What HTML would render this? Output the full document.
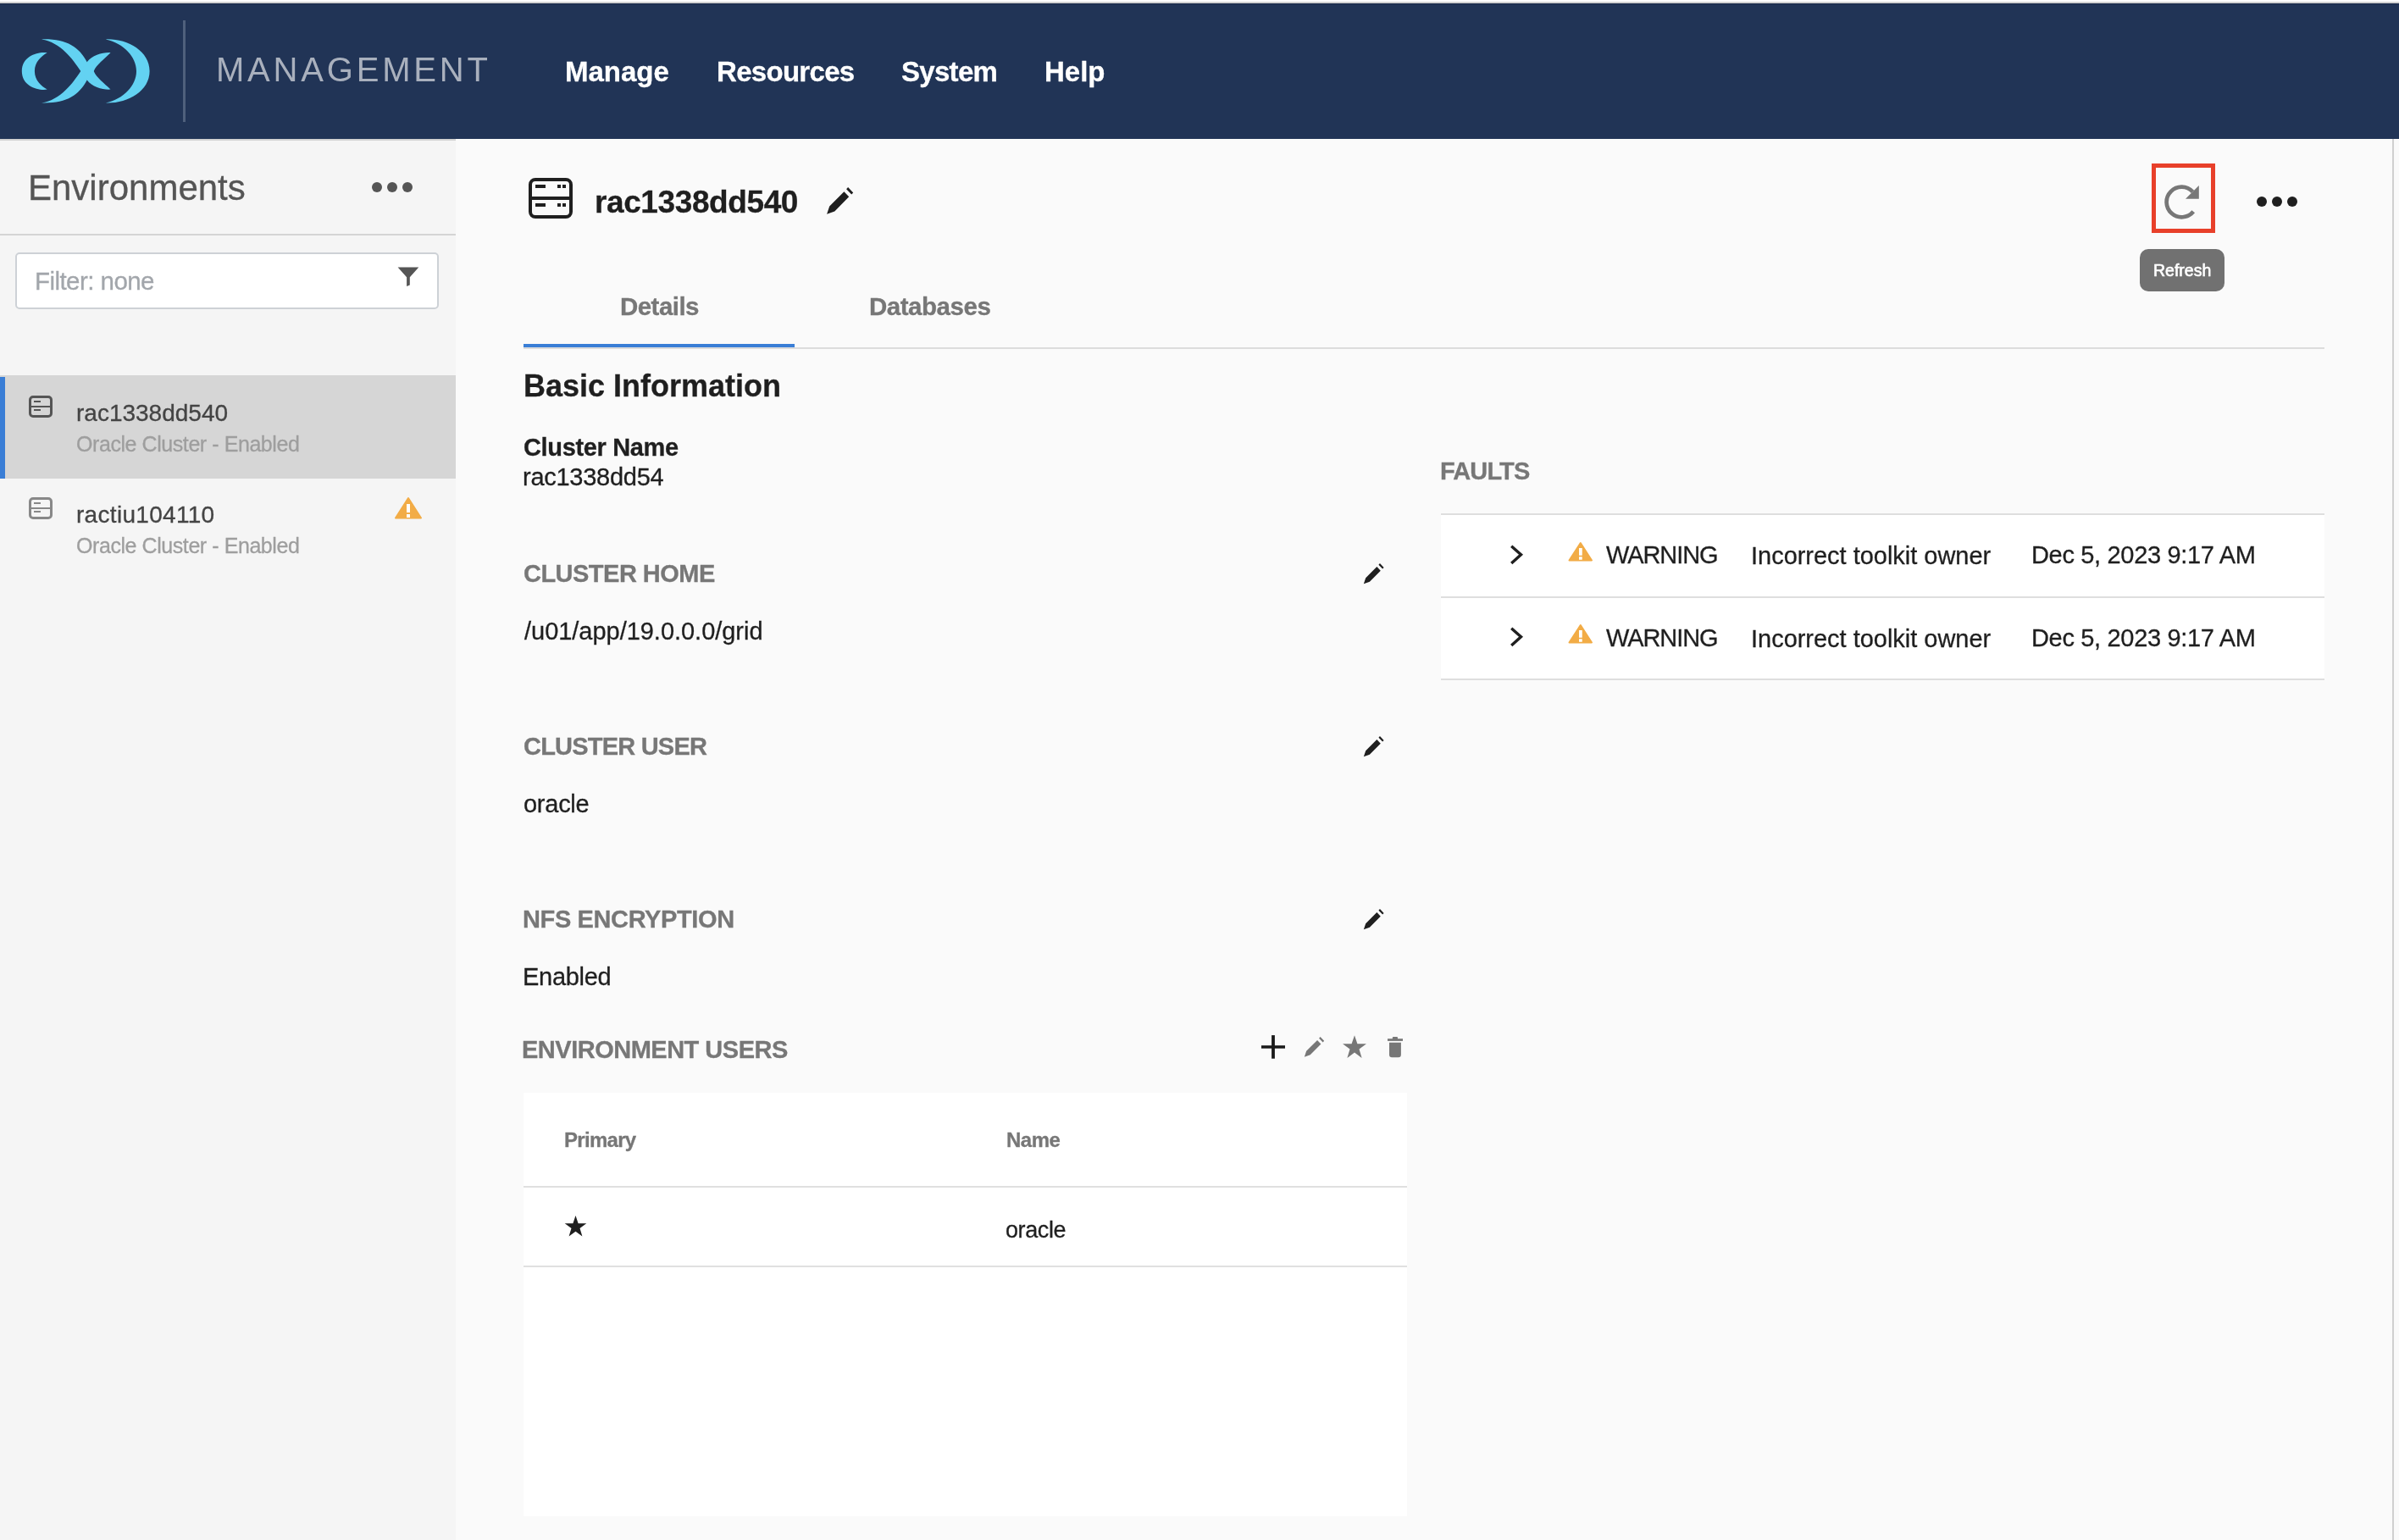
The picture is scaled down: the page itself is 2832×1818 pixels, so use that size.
<!DOCTYPE html>
<html><head><meta charset="utf-8">
<style>
*{margin:0;padding:0;box-sizing:border-box}
html,body{width:2832px;height:1818px;overflow:hidden;background:#fafafa;font-family:"Liberation Sans",sans-serif;position:relative}
.a{position:absolute;white-space:nowrap;line-height:1}
.t,#mgmt,#tip{will-change:transform}
.b{font-weight:bold}
.t{-webkit-text-stroke:0.3px currentColor}
svg{position:absolute;overflow:visible}
</style></head><body>
<!-- top strip -->
<div class="a" style="left:0;top:0;width:2832px;height:2px;background:#fff"></div>
<div class="a" style="left:0;top:2px;width:2832px;height:2px;background:#d3d3d3"></div>
<!-- header -->
<div class="a" style="left:0;top:4px;width:2832px;height:160px;background:#213456"></div>
<div class="a" style="left:0;top:4px;width:2832px;height:1px;background:#182848"></div>
<svg style="left:0;top:0" width="200" height="160" viewBox="0 0 200 160">
 <g fill="#63d2f2">
  <path d="M55.7,62.2 C45,60.5 25.8,66 25.8,83.9 C25.8,101.8 45,107.3 55.7,105.6 C49,101.8 40.9,94.8 40.9,83.9 C40.9,73 49,66 55.7,62.2 Z"/>
  <path d="M49,46.4 C78,45.5 93,55 102.7,73.3 L110.7,83.9 L102.7,94.5 C93,112.8 78,122.3 49,121.4 C72,117.8 86,97.8 95.3,83.9 C86,70 72,50 49,46.4 Z"/>
  <path d="M130.5,62.2 C122,61.5 109,65 102.7,73.3 L95.3,83.9 L102.7,94.5 C109,102.8 122,106.3 130.5,105.6 C123,97.8 114,91.8 110.7,83.9 C114,76 123,70 130.5,62.2 Z"/>
  <path d="M124.9,46.4 C150,45.5 176.6,60 176.6,83.9 C176.6,107.8 150,122.3 124.9,121.4 C146,116.8 161,100.8 161,83.9 C161,67 146,51 124.9,46.4 Z"/>
 </g>
</svg>
<div class="a" style="left:216px;top:24px;width:3px;height:120px;background:#4f607c"></div>
<div class="a" id="mgmt" style="left:255px;top:62px;font-size:40px;color:#a9b0bd;letter-spacing:3.8px">MANAGEMENT</div>
<div class="a b t" id="nav1" style="left:667px;top:68px;font-size:33px;color:#fff">Manage</div>
<div class="a b t" id="nav2" style="left:846px;top:68px;font-size:33px;color:#fff;letter-spacing:-0.7px">Resources</div>
<div class="a b t" id="nav3" style="left:1064px;top:68px;font-size:33px;color:#fff;letter-spacing:-0.7px">System</div>
<div class="a b t" id="nav4" style="left:1233px;top:68px;font-size:33px;color:#fff">Help</div>

<!-- sidebar -->
<div class="a" style="left:0;top:164px;width:538px;height:1654px;background:#f5f5f5"></div>
<div class="a" style="left:0;top:164px;width:538px;height:2px;background:#d2d2d2"></div>
<div class="a t" id="envs" style="left:33px;top:201px;font-size:42px;color:#555">Environments</div>
<div class="a" style="left:439px;top:215px;width:12px;height:12px;border-radius:50%;background:#555"></div>
<div class="a" style="left:457px;top:215px;width:12px;height:12px;border-radius:50%;background:#555"></div>
<div class="a" style="left:475px;top:215px;width:12px;height:12px;border-radius:50%;background:#555"></div>
<div class="a" style="left:0;top:276px;width:538px;height:2px;background:#d4d4d4"></div>
<div class="a" style="left:18px;top:298px;width:500px;height:67px;border:2px solid #cdd1d6;border-radius:5px;background:#fff"></div>
<div class="a t" id="filt" style="left:41px;top:316.6px;font-size:29.5px;color:#a2a6ab;letter-spacing:-0.55px">Filter: none</div>
<svg style="left:455px;top:305px" width="55" height="45" viewBox="0 0 55 45">
 <path d="M14.6,10.4 L39.3,10.4 L28.8,22.2 L28.8,31.6 L25.1,33 L25.1,22.2 Z" fill="#555"/>
</svg>
<!-- selected item -->
<div class="a" style="left:0;top:443px;width:538px;height:122px;background:#d6d6d6"></div>
<div class="a" style="left:0;top:445px;width:6px;height:120px;background:#3a7ed6"></div>
<svg style="left:34px;top:467px" width="28" height="26" viewBox="0 0 28 26">
 <rect x="1.5" y="1.5" width="25" height="23" rx="3.5" fill="none" stroke="#555" stroke-width="3"/>
 <rect x="1.5" y="12" width="25" height="2" fill="#555"/>
 <rect x="6" y="6" width="8" height="2" fill="#555"/>
 <rect x="6" y="16" width="8" height="2" fill="#555"/>
</svg>
<div class="a t" id="s1n" style="left:90px;top:474px;font-size:28px;color:#444">rac1338dd540</div>
<div class="a t" id="s1s" style="left:90px;top:511.5px;font-size:25px;color:#9e9e9e;letter-spacing:-0.43px">Oracle Cluster - Enabled</div>
<svg style="left:34px;top:587px" width="28" height="26" viewBox="0 0 28 26">
 <rect x="1.5" y="1.5" width="25" height="23" rx="3.5" fill="none" stroke="#888" stroke-width="3"/>
 <rect x="1.5" y="12" width="25" height="2" fill="#888"/>
 <rect x="6" y="6" width="8" height="2" fill="#888"/>
 <rect x="6" y="16" width="8" height="2" fill="#888"/>
</svg>
<div class="a t" id="s2n" style="left:90px;top:594px;font-size:28px;color:#444;letter-spacing:0.3px">ractiu104110</div>
<div class="a t" id="s2s" style="left:90px;top:631.5px;font-size:25px;color:#9e9e9e;letter-spacing:-0.43px">Oracle Cluster - Enabled</div>
<svg style="left:466px;top:587px" width="32" height="26" viewBox="0 0 32 26">
 <path d="M16,1 L31,24.5 L1,24.5 Z" fill="#f2ac46" stroke="#f2ac46" stroke-width="2" stroke-linejoin="round"/>
 <rect x="14" y="8" width="4" height="10" fill="#fff"/>
 <rect x="14" y="20" width="4" height="4" fill="#fff"/>
</svg>

<!-- main scrollbar edge -->
<div class="a" style="left:2824px;top:164px;width:2px;height:1654px;background:#d0d0d0"></div>

<!-- title -->
<svg style="left:624px;top:210px" width="52" height="48" viewBox="0 0 52 48">
 <rect x="2" y="2" width="48" height="44" rx="6" fill="none" stroke="#1f1f1f" stroke-width="4"/>
 <rect x="2" y="22" width="48" height="4" fill="#1f1f1f"/>
 <rect x="8" y="8" width="12" height="4" fill="#1f1f1f"/>
 <rect x="34" y="8" width="4" height="4" fill="#1f1f1f"/>
 <rect x="40" y="8" width="4" height="4" fill="#1f1f1f"/>
 <rect x="8" y="30" width="12" height="4" fill="#1f1f1f"/>
 <rect x="34" y="30" width="4" height="4" fill="#1f1f1f"/>
 <rect x="40" y="30" width="4" height="4" fill="#1f1f1f"/>
</svg>
<div class="a b t" id="title" style="left:702px;top:220px;font-size:37px;color:#1f1f1f;letter-spacing:-0.4px">rac1338dd540</div>
<svg style="left:975px;top:221px" width="34" height="34" viewBox="0 0 34 34">
 <path d="M1.1,31.7 L4.2,22.4 L21.4,5.2 L27.2,11.3 L10.3,28.4 Z M24.1,2.2 L26.1,0.1 L32.2,6.4 L30.2,8.6 Z" fill="#1f1f1f"/>
</svg>

<!-- refresh -->
<div class="a" style="left:2540px;top:193px;width:75px;height:82px;border:5px solid #e8402a"></div>
<svg style="left:2545px;top:205px" width="60" height="60" viewBox="0 0 60 60">
 <path d="M44.23,44.7 A17.8,17.8 0 1 1 43.42,21.36" fill="none" stroke="#777" stroke-width="4.7"/>
 <path d="M50.8,14 L50.8,29.8 L35,29.8 Z" fill="#777"/>
</svg>
<div class="a" style="left:2664px;top:232px;width:12px;height:12px;border-radius:50%;background:#1f1f1f"></div>
<div class="a" style="left:2682px;top:232px;width:12px;height:12px;border-radius:50%;background:#1f1f1f"></div>
<div class="a" style="left:2700px;top:232px;width:12px;height:12px;border-radius:50%;background:#1f1f1f"></div>
<div class="a" style="left:2526px;top:294px;width:100px;height:50px;border-radius:10px;background:#717171"></div>
<div class="a" id="tip" style="left:2542px;top:310px;font-size:19.5px;color:#fff;-webkit-text-stroke:0.6px #fff">Refresh</div>

<!-- tabs -->
<div class="a b t" id="tab1" style="left:731.8px;top:346.6px;font-size:29.5px;color:#777;letter-spacing:-0.55px">Details</div>
<div class="a b t" id="tab2" style="left:1025.8px;top:346.6px;font-size:29.5px;color:#777;letter-spacing:-0.47px">Databases</div>
<div class="a" style="left:618px;top:410px;width:2126px;height:2px;background:#dcdcdc"></div>
<div class="a" style="left:618px;top:406px;width:320px;height:4px;background:#3a7ed6"></div>

<!-- basic info -->
<div class="a b t" id="basic" style="left:618px;top:438px;font-size:36px;color:#1f1f1f">Basic Information</div>
<div class="a b t" id="cn" style="left:617.8px;top:513.5px;font-size:29px;color:#1f1f1f;letter-spacing:-0.35px">Cluster Name</div>
<div class="a t" id="cnv" style="left:616.7px;top:549.1px;font-size:29px;color:#1f1f1f;letter-spacing:-0.27px">rac1338dd54</div>

<div class="a b t" id="ch" style="left:617.7px;top:663.4px;font-size:29px;color:#777;letter-spacing:-0.52px">CLUSTER HOME</div>
<div class="a t" id="chv" style="left:618.7px;top:731.4px;font-size:29px;color:#1f1f1f;letter-spacing:-0.03px">/u01/app/19.0.0.0/grid</div>
<div class="a b t" id="cu" style="left:617.7px;top:867.4px;font-size:29px;color:#777;letter-spacing:-0.79px">CLUSTER USER</div>
<div class="a t" id="cuv" style="left:617.7px;top:935.4px;font-size:29px;color:#1f1f1f;letter-spacing:-0.26px">oracle</div>
<div class="a b t" id="nfs" style="left:616.7px;top:1071.3px;font-size:29px;color:#777;letter-spacing:-0.38px">NFS ENCRYPTION</div>
<div class="a t" id="nfsv" style="left:616.7px;top:1139.3px;font-size:29px;color:#1f1f1f;letter-spacing:-0.28px">Enabled</div>

<svg style="left:1609px;top:665px" width="26" height="26" viewBox="0 0 34 34">
 <path d="M1.1,31.7 L4.2,22.4 L21.4,5.2 L27.2,11.3 L10.3,28.4 Z M24.1,2.2 L26.1,0.1 L32.2,6.4 L30.2,8.6 Z" fill="#1f1f1f"/>
</svg>
<svg style="left:1609px;top:869px" width="26" height="26" viewBox="0 0 34 34">
 <path d="M1.1,31.7 L4.2,22.4 L21.4,5.2 L27.2,11.3 L10.3,28.4 Z M24.1,2.2 L26.1,0.1 L32.2,6.4 L30.2,8.6 Z" fill="#1f1f1f"/>
</svg>
<svg style="left:1609px;top:1073px" width="26" height="26" viewBox="0 0 34 34">
 <path d="M1.1,31.7 L4.2,22.4 L21.4,5.2 L27.2,11.3 L10.3,28.4 Z M24.1,2.2 L26.1,0.1 L32.2,6.4 L30.2,8.6 Z" fill="#1f1f1f"/>
</svg>

<!-- env users -->
<div class="a b t" id="eu" style="left:616.0px;top:1225.3px;font-size:29px;color:#777;letter-spacing:-0.5px">ENVIRONMENT USERS</div>
<svg style="left:1480px;top:1215px" width="185" height="43" viewBox="0 0 185 43">
 <rect x="9" y="19.2" width="28" height="3.5" fill="#1a1a1a"/>
 <rect x="21.1" y="7.1" width="3.8" height="27.6" fill="#1a1a1a"/>
 <g transform="translate(59,9) scale(0.75)">
  <path d="M1.1,31.7 L4.2,22.4 L21.4,5.2 L27.2,11.3 L10.3,28.4 Z M24.1,2.2 L26.1,0.1 L32.2,6.4 L30.2,8.6 Z" fill="#777"/>
 </g>
 <path d="M119,7.3 L122.4,17.3 L133,17.3 L124.5,23.6 L127.6,33.9 L119,27.5 L110.4,33.9 L113.5,23.6 L105,17.3 L115.6,17.3 Z" fill="#777"/>
 <rect x="158" y="11.2" width="18" height="2.7" fill="#777"/>
 <rect x="163.8" y="9" width="6.2" height="3" rx="1" fill="#777"/>
 <path d="M160,15.8 L173.9,15.8 L173.9,30 Q173.9,33.2 170.7,33.2 L163.2,33.2 Q160,33.2 160,30 Z" fill="#777"/>
</svg>
<div class="a" style="left:618px;top:1290px;width:1043px;height:500px;background:#fff"></div>
<div class="a b t" id="prim" style="left:666px;top:1334px;font-size:24px;color:#777;letter-spacing:-0.7px">Primary</div>
<div class="a b t" id="name" style="left:1188px;top:1334px;font-size:24px;color:#777;letter-spacing:-0.5px">Name</div>
<div class="a" style="left:618px;top:1400px;width:1043px;height:2px;background:#e0e0e0"></div>
<svg style="left:666px;top:1434px" width="27" height="27" viewBox="0 0 27 27">
 <path d="M13.5,1 L16.6,10.2 L26.3,10.2 L18.5,16 L21.4,25.6 L13.5,19.7 L5.6,25.6 L8.5,16 L0.7,10.2 L10.4,10.2 Z" fill="#1f1f1f"/>
</svg>
<div class="a t" id="orv" style="left:1187px;top:1439px;font-size:27px;color:#1f1f1f;letter-spacing:-0.4px">oracle</div>
<div class="a" style="left:618px;top:1494px;width:1043px;height:2px;background:#e0e0e0"></div>

<!-- faults -->
<div class="a b t" id="faults" style="left:1700.0px;top:541.9px;font-size:29px;color:#777;letter-spacing:-0.86px">FAULTS</div>
<div class="a" style="left:1701px;top:607px;width:1043px;height:195px;background:#fff"></div>
<div class="a" style="left:1701px;top:606px;width:1043px;height:2px;background:#dedede"></div>
<div class="a" style="left:1701px;top:704px;width:1043px;height:2px;background:#dedede"></div>
<div class="a" style="left:1701px;top:801px;width:1043px;height:2px;background:#dedede"></div>

<svg style="left:1770px;top:630px" width="120" height="50" viewBox="0 0 120 50">
 <path d="M14.2,14.8 L25.5,24.8 L14.2,35" fill="none" stroke="#1f1f1f" stroke-width="3.4"/>
 <path d="M95.8,11 L109,31.5 L82.5,31.5 Z" fill="#f2ac46" stroke="#f2ac46" stroke-width="2" stroke-linejoin="round"/>
 <rect x="94" y="17" width="3.75" height="8.75" fill="#fff"/>
 <rect x="94" y="27.25" width="3.75" height="3.5" fill="#fff"/>
</svg>
<div class="a t" id="w1" style="left:1896.0px;top:641.2px;font-size:29px;color:#1f1f1f;letter-spacing:-1.07px">WARNING</div>
<div class="a t" id="i1" style="left:2066.5px;top:642.2px;font-size:29px;color:#1f1f1f;letter-spacing:-0.02px">Incorrect toolkit owner</div>
<div class="a t" id="d1" style="left:2398.0px;top:641.4px;font-size:29px;color:#1f1f1f;letter-spacing:-0.33px">Dec 5, 2023 9:17 AM</div>

<svg style="left:1770px;top:727px" width="120" height="50" viewBox="0 0 120 50">
 <path d="M14.2,14.8 L25.5,24.8 L14.2,35" fill="none" stroke="#1f1f1f" stroke-width="3.4"/>
 <path d="M95.8,11 L109,31.5 L82.5,31.5 Z" fill="#f2ac46" stroke="#f2ac46" stroke-width="2" stroke-linejoin="round"/>
 <rect x="94" y="17" width="3.75" height="8.75" fill="#fff"/>
 <rect x="94" y="27.25" width="3.75" height="3.5" fill="#fff"/>
</svg>
<div class="a t" id="w2" style="left:1896.0px;top:739.0px;font-size:29px;color:#1f1f1f;letter-spacing:-1.07px">WARNING</div>
<div class="a t" id="i2" style="left:2066.5px;top:739.8px;font-size:29px;color:#1f1f1f;letter-spacing:-0.02px">Incorrect toolkit owner</div>
<div class="a t" id="d2" style="left:2398.0px;top:739.0px;font-size:29px;color:#1f1f1f;letter-spacing:-0.33px">Dec 5, 2023 9:17 AM</div>

</body></html>
